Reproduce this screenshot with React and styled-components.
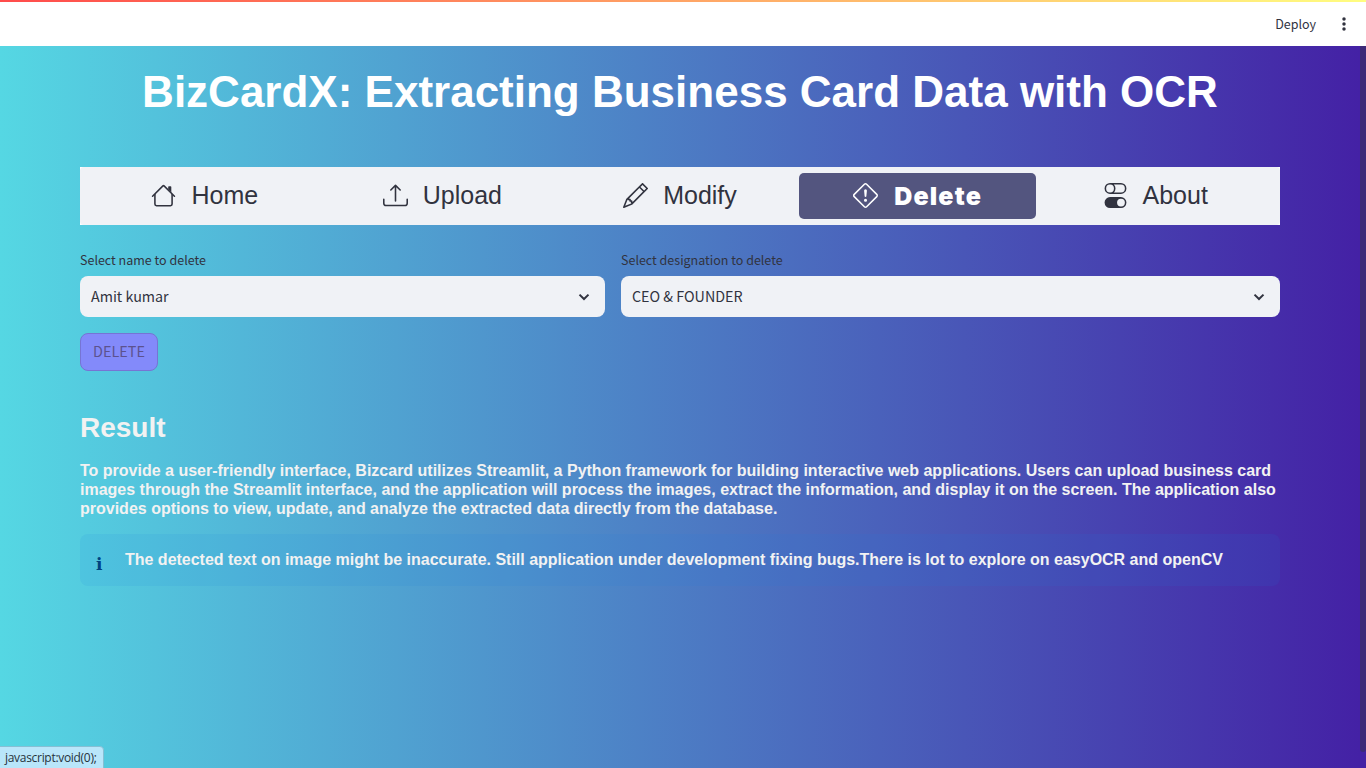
import React from "react";
import styled, { createGlobalStyle } from "styled-components";
import { BsUpload, BsPencil, BsExclamationDiamond, BsToggles } from "react-icons/bs";

const sans = `"Noto Sans CJK JP", sans-serif`;
const arial = `"Liberation Sans", Arial, sans-serif`;

const GlobalStyle = createGlobalStyle`
  *, *::before, *::after { box-sizing: border-box; }
  body { margin: 0; overflow: hidden; }
`;

const Page = styled.div`
  position: relative;
  display: flex;
  flex-direction: column;
  width: 1366px;
  height: 768px;
  overflow: hidden;
  background: linear-gradient(to right, #55d7e3, #4421a5 1360px);
  font-family: ${sans};
  color: #31333f;
`;

const Header = styled.header`
  flex: none;
  display: flex;
  align-items: center;
  justify-content: flex-end;
  gap: 24px;
  height: 46px;
  padding: 2px 18px 0 0;
  background: linear-gradient(to right, #ff4b4b, #fffd80) top / 100% 2px no-repeat #fff;
`;

const Deploy = styled.span`
  font-size: 12.5px;
  line-height: 20px;
`;

const Main = styled.main`
  display: flex;
  flex-direction: column;
  width: 1200px;
  margin-left: 80px;
`;

const Title = styled.h1`
  margin: 19px 0 0;
  height: 54px;
  font: 700 44px/54px ${arial};
  text-align: center;
  white-space: nowrap;
  color: #fff;
`;

const NavFrame = styled.div`
  margin-top: 48px;
  background: #fff;
`;

const Nav = styled.nav`
  display: flex;
  height: 58px;
  padding: 6px;
  border-radius: 4px;
  background: #f0f2f6;
`;

const NavItem = styled.a`
  flex: 1;
  display: flex;
  align-items: center;
  justify-content: center;
  gap: ${(p) => (p.$active ? "16px" : "15px")};
  border-radius: 5px;
  font: ${(p) => (p.$active ? `900 25px/46px Inter, ${arial}` : `400 25px/44px ${arial}`)};
  letter-spacing: ${(p) => (p.$active ? "1.2px" : "0")};
  color: ${(p) => (p.$active ? "#fff" : "#31333f")};
  background: ${(p) => (p.$active ? "#53557f" : "transparent")};

  svg { flex: none; width: 25px; height: 25px; margin-top: -2px; }
`;

const NavLabel = styled.span`
  height: 46px;
`;

const Fields = styled.div`
  display: grid;
  grid-template-columns: 525px 659px;
  gap: 16px;
  margin-top: 25px;
`;

const Label = styled.div`
  height: 26px;
  font-size: 12.5px;
  line-height: 20px;
`;

const Select = styled.div`
  display: flex;
  align-items: center;
  justify-content: space-between;
  height: 41px;
  padding: 0 15px 0 11px;
  border-radius: 8px;
  background: #f0f2f6;
  font-size: 14.3px;
  line-height: 20px;
`;

const Value = styled.span`
  padding-bottom: 1px;
`;

const DeleteButton = styled.button`
  align-self: flex-start;
  width: 78px;
  height: 38px;
  margin-top: 16px;
  padding: 0 0 2px;
  border: 1px solid #7674d4;
  border-radius: 8px;
  background: #838afa;
  color: #5c528e;
  font: 400 14.4px/34px ${sans};
`;

const Result = styled.h2`
  margin: 40px 0 0;
  font: 700 28px/34px ${arial};
  color: #f2f2f2;
`;

const Paragraph = styled.p`
  margin: 16px 0 0;
  font: 700 16px/19px ${arial};
  white-space: nowrap;
  color: #f2f2f2;
`;

const Alert = styled.div`
  display: flex;
  align-items: center;
  height: 52px;
  margin-top: 16px;
  padding: 0 16px;
  border-radius: 8px;
  background: rgba(28, 131, 225, 0.1);
`;

const InfoMark = styled.span`
  width: 29px;
  padding-top: 7px;
  font: 700 17px/20px "DejaVu Serif", serif;
  color: #004280;
`;

const AlertText = styled.span`
  font: 700 16px/20px ${arial};
  letter-spacing: -0.007px;
  white-space: nowrap;
  color: #f2f2f2;
`;

const ScrollThumb = styled.div`
  position: absolute;
  top: 46px;
  right: 0;
  width: 6px;
  height: 706px;
  border-radius: 0 0 3px 3px;
  background: #3c2a78;
`;

const StatusBubble = styled.div`
  position: absolute;
  left: -1px;
  bottom: -1px;
  width: 105px;
  height: 23px;
  padding-left: 5px;
  border: 1px solid #86bfd4;
  border-radius: 0 4px 0 0;
  background: #b9e6fa;
  font: 400 12px/21px "Open Sans", sans-serif;
  letter-spacing: -0.3px;
  color: #26323a;
`;

const House = () => (
  <svg viewBox="0 0 16 16" fill="currentColor">
    <path fillRule="evenodd" d="M2 13.5V7h1v6.5a.5.5 0 0 0 .5.5h9a.5.5 0 0 0 .5-.5V7h1v6.5a1.5 1.5 0 0 1-1.5 1.5h-9A1.5 1.5 0 0 1 2 13.5zm11-11V6l-2-2V2.5a.5.5 0 0 1 .5-.5h1a.5.5 0 0 1 .5.5z" />
    <path fillRule="evenodd" d="M7.293 1.5a1 1 0 0 1 1.414 0l6.647 6.646a.5.5 0 0 1-.708.708L8 2.207 1.354 8.854a.5.5 0 1 1-.708-.708L7.293 1.5z" />
  </svg>
);

const Chevron = () => (
  <svg width="12" height="8" viewBox="0 0 12 8" fill="none">
    <path d="M1.5 1.6 6 6l4.5-4.4" stroke="#31333f" strokeWidth="2" />
  </svg>
);

const Dots = () => (
  <svg width="8" height="16" viewBox="0 0 8 16" fill="#31333f">
    <circle cx="4" cy="3" r="1.75" />
    <circle cx="4" cy="8" r="1.75" />
    <circle cx="4" cy="13" r="1.75" />
  </svg>
);

const items = [
  { label: "Home", Icon: House },
  { label: "Upload", Icon: BsUpload },
  { label: "Modify", Icon: BsPencil },
  { label: "Delete", Icon: BsExclamationDiamond, active: true },
  { label: "About", Icon: BsToggles },
];

const fields = [
  { label: "Select name to delete", value: "Amit kumar" },
  { label: "Select designation to delete", value: "CEO & FOUNDER" },
];

export default function App() {
  return (
    <Page>
      <GlobalStyle />
      <Header>
        <Deploy>Deploy</Deploy>
        <Dots />
      </Header>
      <Main>
        <Title>BizCardX: Extracting Business Card Data with OCR</Title>
        <NavFrame>
          <Nav>
            {items.map(({ label, Icon, active }) => (
              <NavItem key={label} $active={active}>
                <Icon />
                <NavLabel>{label}</NavLabel>
              </NavItem>
            ))}
          </Nav>
        </NavFrame>
        <Fields>
          {fields.map(({ label, value }) => (
            <div key={label}>
              <Label>{label}</Label>
              <Select>
                <Value>{value}</Value>
                <Chevron />
              </Select>
            </div>
          ))}
        </Fields>
        <DeleteButton>DELETE</DeleteButton>
        <Result>Result</Result>
        <Paragraph>
          To provide a user-friendly interface, Bizcard utilizes Streamlit, a Python framework for building interactive web applications. Users can upload business card
          <br />
          images through the Streamlit interface, and the application will process the images, extract the information, and display it on the screen. The application also
          <br />
          provides options to view, update, and analyze the extracted data directly from the database.
        </Paragraph>
        <Alert>
          <InfoMark>i</InfoMark>
          <AlertText>
            The detected text on image might be inaccurate. Still application under development fixing bugs.There is lot to explore on easyOCR and openCV
          </AlertText>
        </Alert>
      </Main>
      <ScrollThumb />
      <StatusBubble>javascript:void(0);</StatusBubble>
    </Page>
  );
}
